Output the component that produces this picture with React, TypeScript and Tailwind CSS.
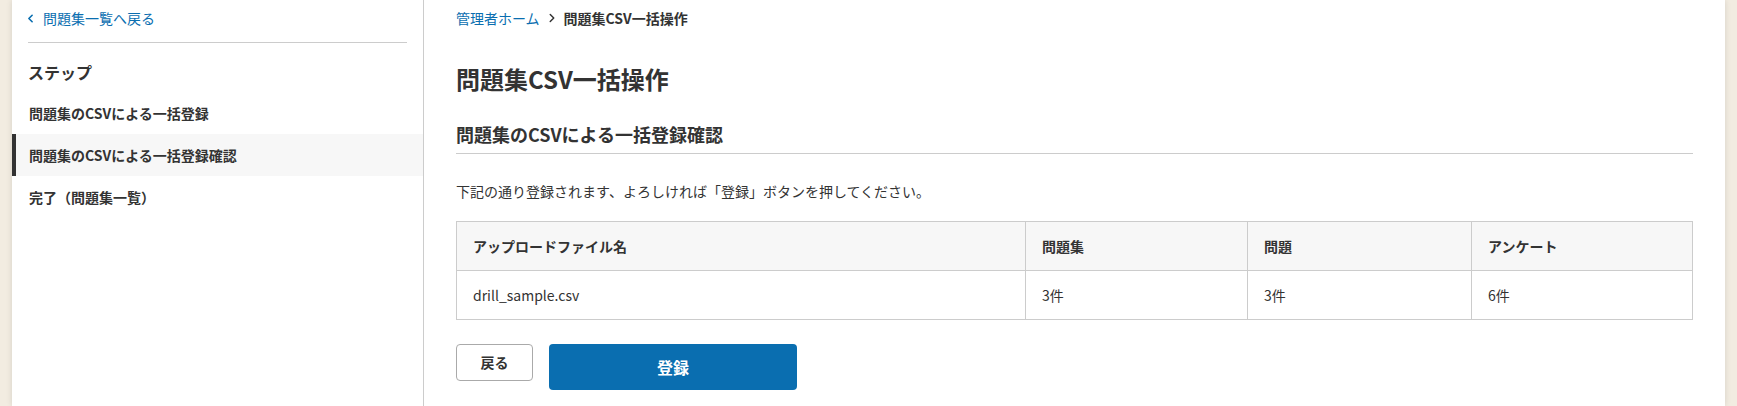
import React from 'react';
import { ChevronLeft, ChevronRight } from 'lucide-react';

const steps = [
  { label: '問題集のCSVによる一括登録', active: false },
  { label: '問題集のCSVによる一括登録確認', active: true },
  { label: '完了（問題集一覧）', active: false },
];

export default function App() {
  return (
    <div
      className="min-h-screen bg-[#f2ece1] px-[12px] text-[#333]"
      style={{ fontFamily: '"Noto Sans CJK JP", "Noto Sans", sans-serif' }}
    >
      <div className="flex min-h-screen bg-white shadow-[0_0_6px_rgba(0,0,0,0.12)]">
        {/* Sidebar */}
        <aside className="w-[412px] shrink-0 border-r border-[#ccc]">
          <div className="px-4">
            <a className="flex items-center gap-[6px] border-b border-[#ccc] pt-[7px] pb-[13px] text-[14px] leading-[22px] text-[#0a6eb0]">
              <ChevronLeft size={13} strokeWidth={3} className="-ml-[4px]" />
              問題集一覧へ戻る
            </a>
            <h2 className="mt-[17px] mb-[8px] text-[16px] font-bold leading-[24px]">ステップ</h2>
          </div>
          <ul>
            {steps.map((s) => (
              <li
                key={s.label}
                className={
                  s.active
                    ? 'flex h-[42px] items-center border-l-4 border-[#333] bg-[#f7f7f7] pl-[13px] text-[14px] font-bold'
                    : 'flex h-[42px] items-center border-l-4 border-transparent pl-[13px] text-[14px] font-bold'
                }
              >
                {s.label}
              </li>
            ))}
          </ul>
        </aside>

        {/* Main */}
        <main className="flex-1 px-8">
          <nav className="flex items-center gap-[5px] pt-[7px] text-[14px] leading-[22px]">
            <a className="text-[#0a6eb0]">管理者ホーム</a>
            <ChevronRight size={14} strokeWidth={2.5} />
            <span className="font-bold">問題集CSV一括操作</span>
          </nav>

          <h1 className="mt-[32px] text-[24px] font-bold leading-[36px]">問題集CSV一括操作</h1>

          <h2 className="mt-[23px] border-b border-[#ccc] pb-[5px] text-[18px] font-bold leading-[28px]">
            問題集のCSVによる一括登録確認
          </h2>

          <p className="mt-[26px] text-[14px] leading-[22px]">
            下記の通り登録されます、よろしければ「登録」ボタンを押してください。
          </p>

          <table className="mt-[19px] w-full table-fixed border-collapse text-[14px] leading-[22px]">
            <colgroup>
              <col className="w-[569px]" />
              <col className="w-[222px]" />
              <col className="w-[224px]" />
              <col />
            </colgroup>
            <thead>
              <tr className="bg-[#f7f7f7]">
                <th className="border border-[#ccc] px-4 py-[13px] text-left font-bold">アップロードファイル名</th>
                <th className="border border-[#ccc] px-4 py-[13px] text-left font-bold">問題集</th>
                <th className="border border-[#ccc] px-4 py-[13px] text-left font-bold">問題</th>
                <th className="border border-[#ccc] px-4 py-[13px] text-left font-bold">アンケート</th>
              </tr>
            </thead>
            <tbody>
              <tr>
                <td className="border border-[#ccc] px-4 py-[13px]">drill_sample.csv</td>
                <td className="border border-[#ccc] px-4 py-[13px]">3件</td>
                <td className="border border-[#ccc] px-4 py-[13px]">3件</td>
                <td className="border border-[#ccc] px-4 py-[13px]">6件</td>
              </tr>
            </tbody>
          </table>

          <div className="mt-[24px] flex items-start gap-4">
            <button className="h-[37px] w-[77px] rounded-[4px] border border-[#aaa] bg-white text-[14px] font-bold">
              戻る
            </button>
            <button className="h-[46px] w-[248px] rounded-[4px] bg-[#0a6eb0] text-[16px] font-bold text-white">
              登録
            </button>
          </div>
        </main>
      </div>
    </div>
  );
}
